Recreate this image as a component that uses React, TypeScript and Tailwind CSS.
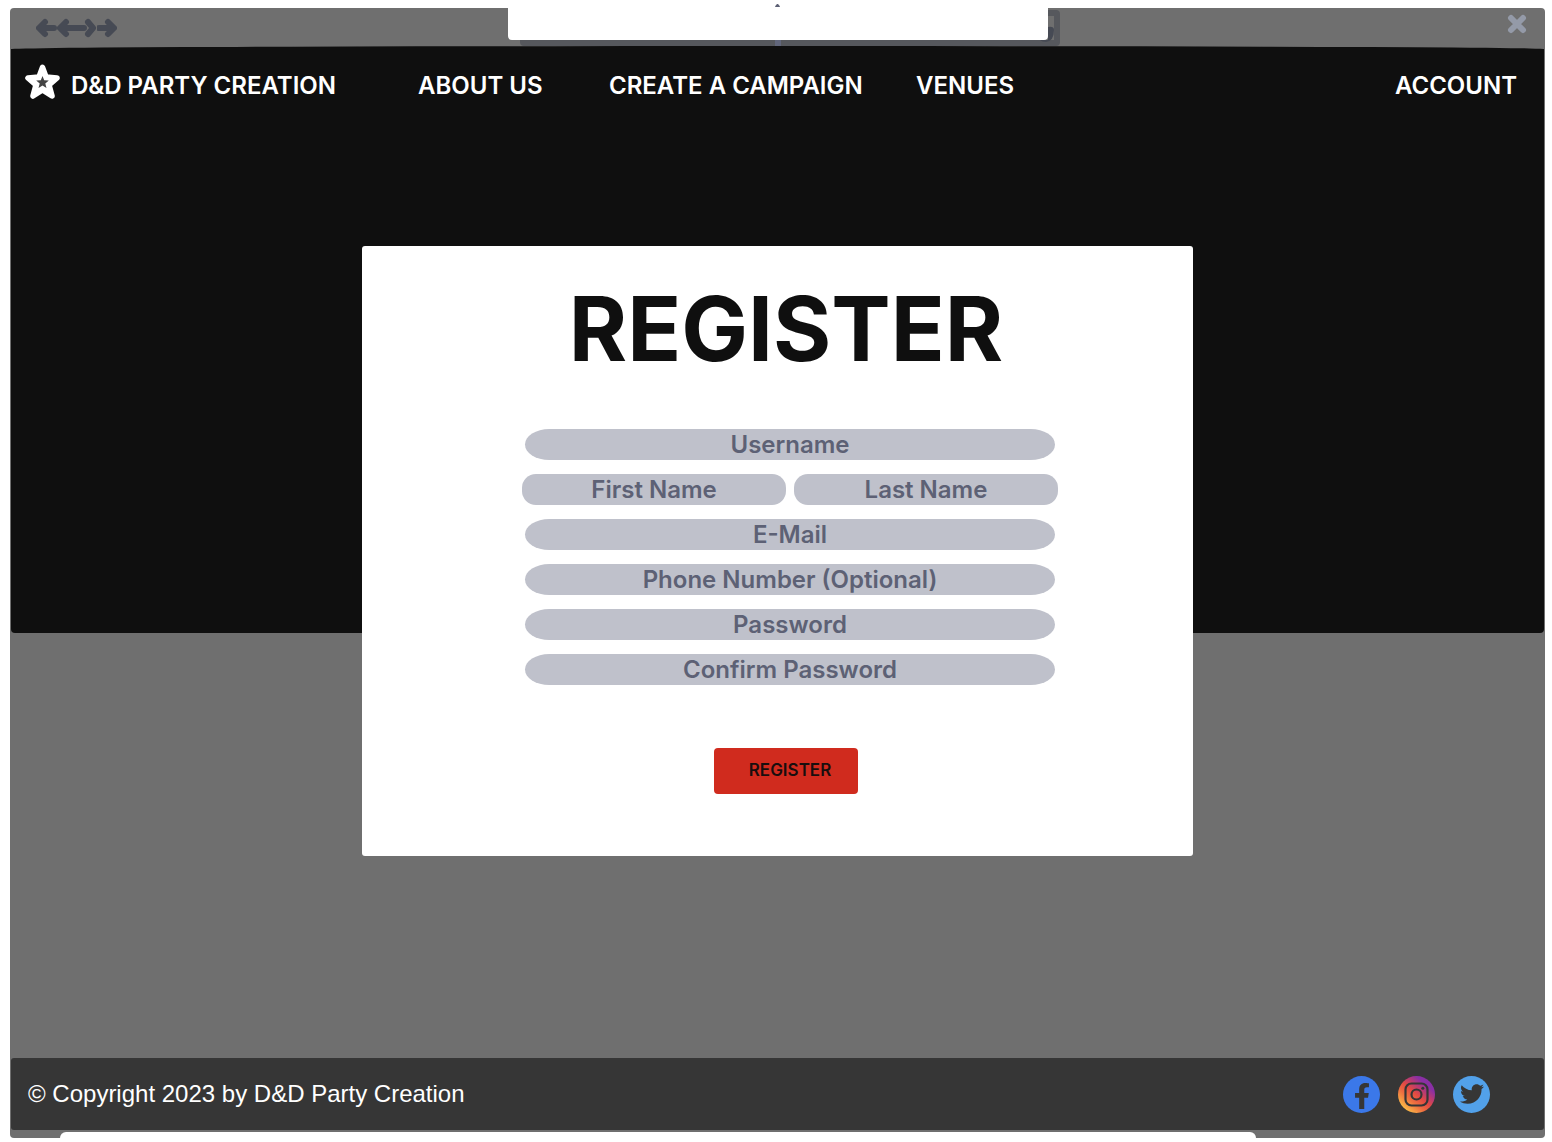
import React from "react";
import { FaFacebookF, FaTwitter } from "react-icons/fa";

type FieldProps = {
  id: string;
  label: string;
  type?: string;
  shape?: string;
};

function Field({ id, label, type = "text", shape = "rounded-[25px/16px]" }: FieldProps) {
  return (
    <input
      id={id}
      name={id}
      type={type}
      aria-label={label}
      placeholder={label}
      className={`block h-[31px] w-full min-w-0 bg-[#bfc1cb] px-4 text-center text-2xl leading-[31px] font-semibold text-[#5d6175] outline-none placeholder:text-[#5d6175] placeholder:opacity-100 ${shape}`}
    />
  );
}

function Arrow({ label, width, d }: { label: string; width: number; d: string }) {
  return (
    <button type="button" aria-label={label} className="block">
      <svg width={width} height="20" viewBox={`0 0 ${width} 20`} fill="none" stroke="#464a54" strokeWidth="6" strokeLinecap="round" strokeLinejoin="round">
        <path d={d} />
      </svg>
    </button>
  );
}

function WindowBar() {
  return (
    <div className="relative flex h-[38px] items-start justify-between pr-[18px] pl-[26px]">
      <div className="flex pt-[10px]">
        <Arrow label="Back" width={21} d="M9 4 3 10l6 6M4 10h14" />
        <Arrow label="Resize" width={40} d="M9 4 3 10l6 6M4 10h23M31 4l5 6-5 6" />
        <Arrow label="Forward" width={20} d="M11 4l6 6-6 6M2 10h14" />
      </div>
      <div className="absolute top-[2px] left-1/2 ml-[-258px] h-9 w-[540px] rounded-sm border-6 border-[#56585d]" />
      <div className="absolute bottom-0 left-1/2 h-2 w-[6px] -translate-x-1/2 bg-[#61667b]" />
      <svg className="absolute top-[18px] left-1/2 ml-[262px]" width="20" height="16" viewBox="0 0 20 16" fill="#464a54">
        <path d="M0 14H8V1q6-1 6 3 0 11-8 12Q2 16 0 14Z" />
      </svg>
      <div className="absolute -top-2 left-1/2 flex h-10 w-[540px] -translate-x-1/2 justify-center rounded-b bg-white pt-1">
        <svg width="5" height="3" viewBox="0 0 5 3" fill="#5d6175">
          <path d="M0 3Q0 2 2 0h1q2 2 2 3Z" />
        </svg>
      </div>
      <button type="button" aria-label="Close" className="mt-[6px]">
        <svg width="20" height="20" viewBox="0 0 20 20" stroke="#949aa8" strokeWidth="6" strokeLinecap="round">
          <path d="M4 4l12 12M16 4 4 16" />
        </svg>
      </button>
    </div>
  );
}

function StarLogo() {
  return (
    <svg className="mb-2" width="36" height="36" viewBox="0 0 36 36" aria-hidden="true">
      <path d="M17.500 3.500 21 13 32 14 24 21 27 32 17.500 26 8 32 11 21 3 14 14 13Z" fill="#fff" stroke="#fff" strokeWidth="5.600" strokeLinejoin="round" />
      <path d="M17.500 12l1.700 4.200 4.600.3-3.500 2.900 1.200 4.600-4-2.600-4 2.600 1.200-4.600-3.500-2.900 4.600-.3Z" fill="#444" />
    </svg>
  );
}

function InstagramGlyph() {
  return (
    <svg width="37" height="37" viewBox="0 0 37 37" fill="none" stroke="#363636">
      <defs>
        <linearGradient id="insta" x1="0.15" y1="0.9" x2="0.85" y2="0.1">
          <stop offset="0" stopColor="#fcc247" />
          <stop offset="0.3" stopColor="#ee7040" />
          <stop offset="0.5" stopColor="#e34a42" />
          <stop offset="0.68" stopColor="#b83a74" />
          <stop offset="0.85" stopColor="#8a2fa5" />
        </linearGradient>
      </defs>
      <circle cx="18.500" cy="18.500" r="18.500" fill="url(#insta)" stroke="none" />
      <rect x="7.500" y="7.500" width="22" height="22" rx="6" strokeWidth="2.200" />
      <circle cx="18.500" cy="18.500" r="5" strokeWidth="2.200" />
      <circle cx="24.800" cy="12.200" r="1.500" fill="#363636" stroke="none" />
    </svg>
  );
}

export default function App() {
  return (
    <div className="flex min-h-screen flex-col bg-white pt-2 pr-[7px] pb-1 pl-[10px] font-['Inter',sans-serif]">
      <div className="relative flex flex-1 flex-col rounded bg-[#6f6f6f]">
        <WindowBar />

        <header className="mx-px h-[587px] bg-[#0f0f0f] [border-radius:50%_50%_4px_4px/3px_3px_4px_4px]">
          <nav aria-label="Main" className="flex h-20 items-center pr-[27px] pl-[14px] text-2xl font-semibold whitespace-nowrap text-white">
            <a href="#home" className="flex w-[393px] items-center gap-[10px]">
              <StarLogo />
              D&amp;D PARTY CREATION
            </a>
            <a href="#about" className="w-[191px]">
              ABOUT US
            </a>
            <a href="#campaign" className="w-[307px]">
              CREATE A CAMPAIGN
            </a>
            <a href="#venues">VENUES</a>
            <a href="#account" className="ml-auto">
              ACCOUNT
            </a>
          </nav>
        </header>

        <main className="relative mx-auto -mt-[387px] flex h-[610px] w-full max-w-[831px] flex-col items-center rounded-[3px] bg-white pl-[25px]">
          <h1 className="mt-[34px] pr-2 text-[89px] leading-[98px] font-bold text-[#0f0f0f]">REGISTER</h1>
          <form className="mt-[51px] flex w-full max-w-[530px] flex-col gap-[14px]" onSubmit={(e: React.FormEvent) => e.preventDefault()}>
            <Field id="username" label="Username" />
            <div className="-mx-[3px] flex gap-2">
              <Field id="first-name" label="First Name" shape="rounded-[14px]" />
              <Field id="last-name" label="Last Name" shape="rounded-[14px]" />
            </div>
            <Field id="email" label="E-Mail" type="email" />
            <Field id="phone" label="Phone Number (Optional)" type="tel" />
            <Field id="password" label="Password" type="password" />
            <Field id="confirm" label="Confirm Password" type="password" />
            <button type="submit" className="mt-[49px] mr-2 h-[46px] w-36 self-center rounded bg-[#d02b1e] pl-2 text-[17px] font-semibold text-[#180e0e]">
              REGISTER
            </button>
          </form>
        </main>

        <footer className="mx-px mt-auto mb-2 flex h-[72px] items-center justify-between rounded-[3px] bg-[#363636] pr-[54px] pl-[17px] text-white">
          <p className="font-['Liberation_Sans',sans-serif] text-2xl">© Copyright 2023 by D&amp;D Party Creation</p>
          <div className="flex gap-[18px]">
            <a href="#facebook" aria-label="Facebook" className="flex size-[37px] items-end justify-center rounded-full bg-[#3b78e9] pb-1 pl-px text-[#363636]">
              <FaFacebookF size={26} />
            </a>
            <a href="#instagram" aria-label="Instagram">
              <InstagramGlyph />
            </a>
            <a href="#twitter" aria-label="Twitter" className="flex size-[37px] items-center justify-center rounded-full bg-[#52a1ea] text-[#363636]">
              <FaTwitter size={24} />
            </a>
          </div>
        </footer>
        <div className="absolute right-[289px] -bottom-px left-[50px] h-[7px] rounded-t-md bg-white" />
      </div>
    </div>
  );
}
